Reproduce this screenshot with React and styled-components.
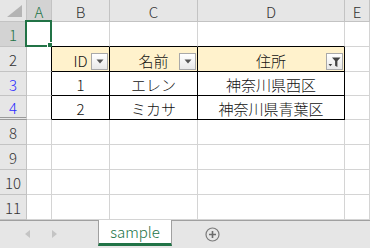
import styled, { createGlobalStyle } from 'styled-components'

const GlobalStyle = createGlobalStyle`
  html, body {
    margin: 0;
    padding: 0;
    background: #ffffff;
    overflow: hidden;
  }
  body {
    font-family: "Noto Sans CJK JP", "Noto Sans", sans-serif;
  }
`;

const GRID = '#d4d4d4';
const HEAD_LINE = '#c3c3c3';
const GREEN = '#217346';

const Window = styled.div`
  width: 370px;
  height: 248px;
  display: flex;
  flex-direction: column;
  overflow: hidden;
`;

const Sheet = styled.div`
  display: grid;
  grid-template-columns: 27px 25px 58px 88px 147px 25px;
  grid-template-rows: ${(p) => p.$rows};
  height: 220px;
  overflow: hidden;
`;

const Corner = styled.div`
  box-sizing: border-box;
  background: #e6e6e6;
  border-right: 1px solid ${HEAD_LINE};
  border-bottom: 1px solid ${HEAD_LINE};
  display: flex;
  align-items: flex-end;
  justify-content: flex-end;
  padding: 0 4px 4px 0;
`;

const ColHead = styled.div`
  box-sizing: border-box;
  background: ${(p) => (p.$selected ? '#d3d3d3' : '#e6e6e6')};
  color: ${(p) => (p.$selected ? GREEN : '#333333')};
  border-right: 1px solid ${HEAD_LINE};
  border-bottom: 1px solid ${(p) => (p.$selected ? GREEN : HEAD_LINE)};
  display: flex;
  align-items: center;
  justify-content: center;
  font-size: 15px;
  font-weight: 300;
  line-height: 1;
  padding-top: 1px;
`;

const RowHead = styled.div`
  box-sizing: border-box;
  background: ${(p) => (p.$selected ? '#d3d3d3' : '#e6e6e6')};
  color: ${(p) => (p.$selected ? GREEN : p.$filtered ? '#2a2aff' : '#333333')};
  border-right: 1px solid ${(p) => (p.$selected ? GREEN : HEAD_LINE)};
  border-bottom: ${(p) => (p.$gap ? '3px double #9a9a9a' : `1px solid ${HEAD_LINE}`)};
  display: flex;
  align-items: center;
  justify-content: center;
  font-size: 15px;
  font-weight: 300;
  line-height: 1;
  padding-top: 1px;
`;

const Cell = styled.div`
  position: relative;
  box-sizing: border-box;
  background: ${(p) => p.$fill || '#ffffff'};
  border-right: 1px solid ${(p) => p.$right || GRID};
  border-bottom: 1px solid ${(p) => p.$bottom || GRID};
  display: flex;
  align-items: center;
  justify-content: center;
  font-size: 15px;
  font-weight: 300;
  line-height: 1;
  color: #111111;
  padding-top: 2px;
  white-space: nowrap;
`;

const Selection = styled.div`
  position: absolute;
  top: -2px;
  left: -2px;
  right: -1px;
  bottom: -1px;
  border: 2px solid ${GREEN};
  pointer-events: none;
`;

const Handle = styled.div`
  position: absolute;
  right: -4px;
  bottom: -4px;
  width: 5px;
  height: 5px;
  background: ${GREEN};
  border: 1px solid #ffffff;
`;

const FilterButton = styled.div`
  position: absolute;
  right: 1px;
  bottom: 1px;
  width: 17px;
  height: 17px;
  box-sizing: border-box;
  border: 1px solid #a9a9a9;
  background: linear-gradient(#ffffff, #e9e9e9);
  display: flex;
  align-items: center;
  justify-content: center;
`;

const TabBar = styled.div`
  display: flex;
  align-items: flex-start;
  height: 28px;
  box-sizing: border-box;
  background: #e6e6e6;
  border-top: 1px solid #a0a0a0;
`;

const Nav = styled.div`
  width: 98px;
  height: 25px;
  display: flex;
  align-items: center;
  gap: 22px;
  padding-left: 25px;
  box-sizing: border-box;
`;

const Tab = styled.div`
  width: 74px;
  height: 26px;
  margin-top: -1px;
  box-sizing: border-box;
  background: #ffffff;
  border-left: 1px solid #a0a0a0;
  border-right: 1px solid #a0a0a0;
  border-bottom: 3px solid ${GREEN};
  color: ${GREEN};
  font-size: 15px;
  font-weight: 300;
  display: flex;
  align-items: center;
  justify-content: center;
`;

const AddSheet = styled.div`
  margin-left: 33px;
  height: 26px;
  display: flex;
  align-items: center;
`;

const rows = [
  { n: 1, h: 25, selected: true },
  { n: 2, h: 25 },
  { n: 3, h: 24, filtered: true },
  { n: 4, h: 24, filtered: true, gap: true },
  { n: 8, h: 25 },
  { n: 9, h: 25 },
  { n: 10, h: 25 },
  { n: 11, h: 25 },
];

const cols = ['A', 'B', 'C', 'D', 'E'];

const table = {
  2: ['ID', '名前', '住所'],
  3: ['1', 'エレン', '神奈川県西区'],
  4: ['2', 'ミカサ', '神奈川県青葉区'],
};

function DropArrow() {
  return (
    <svg width="8" height="5" viewBox="0 0 8 5">
      <path d="M0.5 0.5 H7.5 L4 4.5 Z" fill="#555555" />
    </svg>
  );
}

function FunnelIcon() {
  return (
    <svg width="13" height="12" viewBox="0 0 13 12">
      <path d="M4 1.5 H12.5 L9.4 5 V11 L7.1 9.7 V5 Z" fill="#444444" />
      <path d="M0.5 8 H4.2 L2.35 10.2 Z" fill="#444444" />
    </svg>
  );
}

function Cells({ row }) {
  const inTable = table[row.n];
  const above = table[row.n + 1] && !inTable;
  return cols.map((c, i) => {
    const tIdx = i - 1;
    const isTable = inTable && tIdx >= 0 && tIdx <= 2;
    let right;
    let bottom;
    if (isTable) {
      right = '#000000';
      bottom = '#000000';
    }
    if (inTable && c === 'A') right = '#000000';
    if (above && tIdx >= 0 && tIdx <= 2) bottom = '#000000';
    const header = row.n === 2 && isTable;
    return (
      <Cell
        key={c + row.n}
        $right={right}
        $bottom={bottom}
        $fill={header ? '#fff2cc' : undefined}
      >
        {isTable ? inTable[tIdx] : null}
        {header && (
          <FilterButton>{tIdx === 2 ? <FunnelIcon /> : <DropArrow />}</FilterButton>
        )}
        {row.n === 1 && c === 'A' && (
          <Selection>
            <Handle />
          </Selection>
        )}
      </Cell>
    );
  });
}

export default function App() {
  const template = ['22px', ...rows.map((r) => `${r.h}px`)].join(' ');
  return (
    <Window>
      <GlobalStyle />
      <Sheet $rows={template}>
        <Corner>
          <svg width="15" height="12" viewBox="0 0 15 12">
            <path d="M15 0 V12 H0 Z" fill="#b4b4b4" />
          </svg>
        </Corner>
        {cols.map((c) => (
          <ColHead key={c} $selected={c === 'A'}>
            {c}
          </ColHead>
        ))}
        {rows.map((r) => [
          <RowHead
            key={'h' + r.n}
            $selected={r.selected}
            $filtered={r.filtered}
            $gap={r.gap}
          >
            {r.n}
          </RowHead>,
          <Cells key={'r' + r.n} row={r} />,
        ])}
      </Sheet>
      <TabBar>
        <Nav>
          <svg width="5" height="8" viewBox="0 0 5 8">
            <path d="M5 0 V8 L0 4 Z" fill="#c4c4c4" />
          </svg>
          <svg width="5" height="8" viewBox="0 0 5 8">
            <path d="M0 0 V8 L5 4 Z" fill="#c4c4c4" />
          </svg>
        </Nav>
        <Tab>sample</Tab>
        <AddSheet>
          <svg width="15" height="15" viewBox="0 0 15 15">
            <circle cx="7.5" cy="7.5" r="6.5" fill="none" stroke="#7b7b7b" strokeWidth="1.2" />
            <path d="M7.5 4 V11 M4 7.5 H11" stroke="#6b6b6b" strokeWidth="1.6" />
          </svg>
        </AddSheet>
      </TabBar>
    </Window>
  );
}
